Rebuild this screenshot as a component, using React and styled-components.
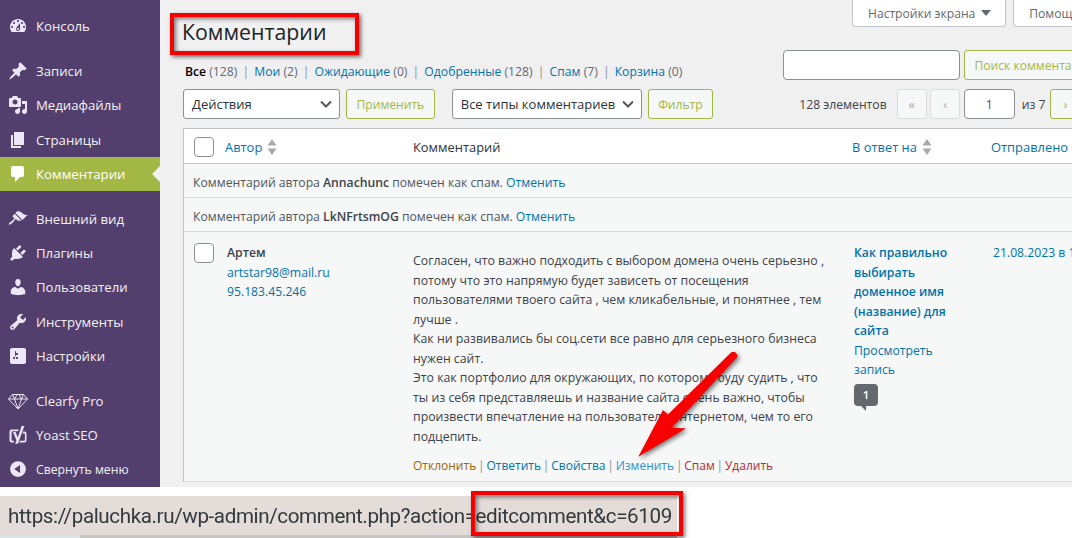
import React from "react";
import styled, { createGlobalStyle } from "styled-components";

const GlobalStyle = createGlobalStyle`
  html, body { margin: 0; padding: 0; background: #fff; }
  body { font-family: "Open Sans", "Noto Sans", sans-serif; font-size: 13px; color: #3c434a; }
  * { box-sizing: border-box; }
`;

const Page = styled.div`
  position: relative;
  width: 1072px;
  height: 538px;
  overflow: hidden;
  display: flex;
  flex-direction: column;
  background: #fff;
`;
const Workspace = styled.div`
  display: flex;
  height: 487px;
  flex: none;
  background: #f0f0f1;
`;
const Sidebar = styled.nav`
  width: 160px;
  flex: none;
  background: #523f6d;
  padding-top: 9px;
`;
const MenuItem = styled.div`
  position: relative;
  height: 34.3px;
  display: flex;
  align-items: center;
  gap: 8px;
  padding-left: 8px;
  font-size: ${(p) => (p.$small ? "12.2px" : "13.2px")};
  color: ${(p) => (p.$active ? "#fff" : "#f3f1f1")};
  background: ${(p) => (p.$active ? "#a3b745" : "transparent")};
  ${(p) =>
    p.$active &&
    `&::after {
      content: "";
      position: absolute;
      right: 0;
      top: 50%;
      margin-top: -8px;
      border: 8px solid transparent;
      border-right-color: #f0f0f1;
      border-left-width: 0;
    }`}
`;
const MenuGap = styled.div`
  height: 10.6px;
`;
const MenuIcon = styled.svg`
  width: 20px;
  height: 20px;
  flex: none;
  fill: ${(p) => (p.$active ? "#fff" : "#ece6f6")};
`;

const Main = styled.main`
  flex: 1;
  min-width: 0;
  overflow: hidden;
`;
const Content = styled.div`
  width: 940px;
  padding-left: 23px;
`;
const HeadRow = styled.div`
  display: flex;
  justify-content: space-between;
  height: 50px;
`;
const Title = styled.h1`
  margin: 0 0 0 -1px;
  padding-top: 16px;
  font-size: 21.3px;
  font-weight: 400;
  line-height: 32px;
  color: #1d2327;
`;
const ScreenTabs = styled.div`
  display: flex;
  gap: 7px;
  width: 248px;
`;
const ScreenTab = styled.div`
  height: 27px;
  padding: 0 14px 0 15px;
  display: flex;
  align-items: center;
  gap: 6px;
  flex: none;
  background: #fff;
  border: 1px solid #c3c4c7;
  border-top: none;
  border-radius: 0 0 4px 4px;
  font-size: 12.1px;
  color: #646970;
`;
const Caret = styled.span`
  width: 0;
  height: 0;
  border: 5px solid transparent;
  border-top: 6px solid #646970;
  border-bottom: none;
`;
const SearchRow = styled.div`
  display: flex;
  justify-content: space-between;
  align-items: flex-start;
  height: 39px;
`;
const ViewList = styled.ul`
  list-style: none;
  display: flex;
  margin: 13px 0 0 2px;
  padding: 0;
  font-size: 12.2px;
  line-height: 18px;
  color: #646970;
`;
const ViewItem = styled.li`
  white-space: pre;
  &:not(:last-child)::after {
    content: "|";
    margin: 0 5.1px;
    color: #8c8f94;
  }
`;
const ViewLink = styled.span`
  color: ${(p) => (p.$current ? "#000" : "#0073aa")};
  font-weight: ${(p) => (p.$current ? 600 : 400)};
`;
const SearchBox = styled.div`
  display: flex;
  gap: 4px;
  width: 317px;
  flex: none;
`;
const SearchInput = styled.div`
  width: 177px;
  height: 30px;
  flex: none;
  background: #fff;
  border: 1px solid #8c8f94;
  border-radius: 4px;
`;
const GreenButton = styled.div`
  height: 30px;
  padding: 0 9.5px;
  display: flex;
  align-items: center;
  justify-content: center;
  flex: none;
  background: #f6f7f7;
  border: 1px solid #a3b745;
  border-radius: 3px;
  color: #a3b745;
  font-size: 12.1px;
  white-space: nowrap;
`;
const Toolbar = styled.div`
  display: flex;
  align-items: center;
  height: 30px;
  margin-bottom: 9px;
`;
const Select = styled.div`
  width: ${(p) => p.$w}px;
  height: 30px;
  flex: none;
  margin-left: ${(p) => p.$ml || 0}px;
  margin-right: 6px;
  padding: 0 8px;
  display: flex;
  align-items: center;
  justify-content: space-between;
  background: #fff;
  border: 1px solid #8c8f94;
  border-radius: 3px;
  color: #2c3338;
  font-size: 13px;
  white-space: nowrap;
`;
const Chevron = styled.svg`
  width: 12px;
  height: 8px;
  flex: none;
  margin-right: -1px;
  fill: none;
  stroke: #50575e;
  stroke-width: 2;
`;
const Pager = styled.div`
  display: flex;
  align-items: center;
  margin-left: 86px;
  font-size: 12.2px;
  color: #3c434a;
`;
const PagerCount = styled.span`
  margin-right: 10px;
`;
const PagerButton = styled.div`
  width: 30px;
  height: 30px;
  margin-right: 3.5px;
  flex: none;
  display: flex;
  align-items: center;
  justify-content: center;
  background: #f6f7f7;
  border: 1px solid ${(p) => (p.$live ? "#a3b745" : "#dcdcde")};
  border-radius: 3px;
  color: ${(p) => (p.$live ? "#a3b745" : "#a7aaad")};
  font-size: 13px;
`;
const PagerInput = styled.div`
  width: 51px;
  height: 30px;
  flex: none;
  display: flex;
  align-items: center;
  justify-content: center;
  background: #fff;
  border: 1px solid #8c8f94;
  border-radius: 4px;
  color: #523f6d;
`;
const PagerTotal = styled.span`
  margin: 0 5px 0 7px;
`;

const Table = styled.div`
  width: 1000px;
  background: #fff;
  border: 1px solid #c3c4c7;
  border-bottom: none;
`;
const GridRow = styled.div`
  display: grid;
  grid-template-columns: 41px 188px 439px 139px 1fr;
`;
const HeadCells = styled(GridRow)`
  height: 35px;
  padding-top: 2px;
  align-items: center;
  background: #fff;
  border-bottom: 1px solid #c3c4c7;
  font-size: 12.9px;
`;
const Check = styled.span`
  display: block;
  width: 20px;
  height: 20px;
  margin: ${(p) => p.$m || "-1px 0 0 10px"};
  background: #fff;
  border: 1px solid #8c8f94;
  border-radius: 4px;
`;
const SortHead = styled.div`
  display: flex;
  align-items: center;
  gap: 5px;
  color: ${(p) => (p.$plain ? "#2c3338" : "#0073aa")};
`;
const SortIcon = styled.svg`
  width: 10px;
  height: 16px;
  margin-top: -1px;
  fill: #a7aaad;
`;
const UndoRow = styled.div`
  height: 34px;
  padding: 4px 0 0 9px;
  display: flex;
  align-items: center;
  white-space: pre;
  background: #f6f7f7;
  border-bottom: 1px solid #dcdcde;
  font-size: 12.2px;
  color: #50575e;
`;
const UndoName = styled.strong`
  font-weight: 600;
  color: #3c434a;
`;
const Link = styled.span`
  color: ${(p) => p.$c || "#0073aa"};
  font-weight: ${(p) => (p.$bold ? 600 : 400)};
`;
const CommentRow = styled(GridRow)`
  height: 250px;
  background: #f6f7f7;
  border-bottom: 1px solid #dcdcde;
  font-size: 12.2px;
  line-height: 19.5px;
`;
const AuthorCell = styled.div`
  padding: 11px 0 0 2px;
  display: flex;
  flex-direction: column;
`;
const AuthorName = styled.strong`
  font-weight: 600;
  color: #3c434a;
`;
const CommentCell = styled.div`
  padding-top: 19px;
  color: #3c434a;
  white-space: nowrap;
`;
const CommentLine = styled.div`
  font-size: 12.3px;
`;
const Actions = styled.div`
  display: flex;
  margin-top: 10px;
  font-size: 12px;
`;
const ActionSep = styled.span`
  margin: 0 1.8px;
  color: #8c8f94;
`;
const ReplyCell = styled.div`
  padding: 11px 0 0 2px;
  width: 110px;
`;
const Bubble = styled.div`
  position: relative;
  width: 24px;
  height: 22px;
  margin-top: 4px;
  background: #646970;
  border-radius: 4px;
  display: flex;
  align-items: center;
  justify-content: center;
  color: #fff;
  font-weight: 600;
  font-size: 11.5px;
  &::after {
    content: "";
    position: absolute;
    left: 7px;
    bottom: -5px;
    border-top: 5px solid #646970;
    border-left: 5px solid transparent;
  }
`;
const DateCell = styled.div`
  padding: 11px 0 0 2px;
  color: #0073aa;
  white-space: nowrap;
`;

const StatusStrip = styled.div`
  flex: 1;
  padding-top: 9px;
`;
const StatusBar = styled.div`
  width: 677px;
  height: 39px;
  padding-left: 8px;
  display: flex;
  align-items: center;
  background: #e3dcd9;
  color: #33383d;
  font-family: Roboto, "Open Sans", sans-serif;
  font-size: 20.6px;
  letter-spacing: -0.38px;
  white-space: nowrap;
`;
const StatusText = styled.span`
  filter: blur(0.5px);
`;
const StatusEdge = styled.div`
  display: flex;
  width: 677px;
  height: 3px;
`;
const StatusEdgePart = styled.div`
  width: ${(p) => p.$w}px;
  flex: ${(p) => (p.$w ? "none" : 1)};
  background: ${(p) => p.$c};
`;

const RedFrame = styled.div`
  position: absolute;
  left: ${(p) => p.$x}px;
  top: ${(p) => p.$y}px;
  width: ${(p) => p.$w}px;
  height: ${(p) => p.$h}px;
  border: 4.5px solid #f50000;
  box-shadow: 2px 2px 4px rgba(0, 0, 0, 0.55), inset 2px 2px 4px rgba(0, 0, 0, 0.5);
  pointer-events: none;
`;
const ArrowLayer = styled.svg`
  position: absolute;
  left: 630px;
  top: 350px;
  width: 115px;
  height: 115px;
  overflow: visible;
  filter: drop-shadow(2px 2px 2px rgba(0, 0, 0, 0.5));
`;

const ICONS = {
  dashboard:
    "M3.76 16h12.48c1.1-1.37 1.76-3.11 1.76-5 0-4.42-3.58-8-8-8s-8 3.58-8 8c0 1.89.66 3.63 1.76 5zM10 4c.55 0 1 .45 1 1s-.45 1-1 1-1-.45-1-1 .45-1 1-1zM6 6c.55 0 1 .45 1 1s-.45 1-1 1-1-.45-1-1 .45-1 1-1zm8 0c.55 0 1 .45 1 1s-.45 1-1 1-1-.45-1-1 .45-1 1-1zm-5.37 5.55L12 7v6c0 1.1-.9 2-2 2s-2-.9-2-2c0-.57.24-1.08.63-1.45zM4 10c.55 0 1 .45 1 1s-.45 1-1 1-1-.45-1-1 .45-1 1-1zm12 0c.55 0 1 .45 1 1s-.45 1-1 1-1-.45-1-1 .45-1 1-1zm-5 3c0-.55-.45-1-1-1s-1 .45-1 1 .45 1 1 1 1-.45 1-1z",
  pin: "M10.44 3.02l1.82-1.82 6.36 6.35-1.83 1.82c-1.05-.68-2.48-.57-3.41.36l-.75.75c-.92.93-1.04 2.35-.35 3.41l-1.83 1.82-2.41-2.41-2.8 2.79c-.42.42-3.38 2.71-3.8 2.29s1.86-3.39 2.28-3.81l2.79-2.79L4.1 9.36l1.83-1.82c1.05.69 2.48.57 3.4-.36l.75-.75c.93-.92 1.05-2.35.36-3.41z",
  media:
    "M13 11V4c0-.55-.45-1-1-1h-1.67L9 1H5L3.67 3H2c-.55 0-1 .45-1 1v7c0 .55.45 1 1 1h10c.55 0 1-.45 1-1zM7 4.5c1.38 0 2.5 1.12 2.5 2.5S8.38 9.5 7 9.5 4.5 8.38 4.5 7 5.62 4.5 7 4.5zM14 6h5v10.5c0 1.38-1.12 2.5-2.5 2.5S14 17.88 14 16.5s1.12-2.5 2.5-2.5c.17 0 .34.02.5.05V9h-3V6zm-4 8.05V13h2v3.5c0 1.38-1.12 2.5-2.5 2.5S7 17.88 7 16.5 8.12 14 9.5 14c.17 0 .34.02.5.05z",
  page: "M6 15V2h10v13H6zm-1 1h8v2H3V5h2v11z",
  comments:
    "M5 2h9c1.1 0 2 .9 2 2v7c0 1.1-.9 2-2 2h-2l-5 5v-5H5c-1.1 0-2-.9-2-2V4c0-1.1.9-2 2-2z",
  appearance:
    "M14.48 11.06L7.41 3.99l1.5-1.5c.5-.56 2.3-.47 3.51.32 1.21.8 1.43 1.28 2.91 2.1 1.18.64 2.45 1.26 4.45.85zm-.71.71L6.7 4.7 4.93 6.47c-.39.39-.39 1.02 0 1.41l1.06 1.06c.39.39.39 1.03 0 1.42-.6.6-1.43 1.11-2.21 1.69-.35.26-.7.53-1.01.84C1.43 13.23.4 14.85 1 15.47c.62.6 2.24-.43 3.58-1.77.31-.31.58-.66.84-1.01.58-.78 1.09-1.61 1.69-2.21.39-.39 1.03-.39 1.42 0l1.06 1.06c.39.39 1.02.39 1.41 0z",
  plugins:
    "M13.11 4.36L9.87 7.6 8 5.73l3.24-3.24c.35-.34 1.05-.2 1.56.32.52.51.66 1.21.31 1.55zm-8 1.77l.91-1.12 9.01 9.01-1.19.84c-.71.71-2.63 1.16-3.82 1.16H6.14L4.9 17.26c-.59.59-1.54.59-2.12 0-.59-.58-.59-1.53 0-2.12l1.24-1.24v-3.88c0-1.13.4-3.19 1.09-3.89zm7.26 3.97l3.24-3.24c.34-.35 1.04-.21 1.55.31.52.51.66 1.21.31 1.55l-3.24 3.25z",
  users:
    "M10 9.25c-2.27 0-2.73-3.44-2.73-3.44C7 4.02 7.82 2 9.97 2c2.16 0 2.98 2.02 2.71 3.81 0 0-.41 3.44-2.68 3.44zm0 2.57L12.72 10c2.39 0 4.52 2.33 4.52 4.53v2.49s-3.65 1.13-7.24 1.13c-3.65 0-7.24-1.13-7.24-1.13v-2.49c0-2.25 1.94-4.48 4.47-4.48z",
  tools:
    "M16.68 9.77c-1.34 1.34-3.3 1.67-4.95.99l-5.41 6.52c-.99.99-2.59.99-3.58 0s-.99-2.59 0-3.57l6.52-5.42c-.68-1.65-.35-3.61.99-4.95 1.28-1.28 3.12-1.62 4.72-1.06l-2.89 2.89 2.82 2.82 2.86-2.87c.53 1.58.18 3.39-1.08 4.65zM3.81 16.21c.4.39 1.04.39 1.43 0 .4-.4.4-1.04 0-1.43-.39-.4-1.03-.4-1.43 0-.39.39-.39 1.03 0 1.43z",
  settings:
    "M18 16V4c0-1.1-.9-2-2-2H4c-1.1 0-2 .9-2 2v12c0 1.1.9 2 2 2h12c1.1 0 2-.9 2-2zM8 11h1c.55 0 1 .45 1 1s-.45 1-1 1H8v1.5c0 .28-.22.5-.5.5s-.5-.22-.5-.5V13H6c-.55 0-1-.45-1-1s.45-1 1-1h1V5.5c0-.28.22-.5.5-.5s.5.22.5.5V7h1c.55 0 1 .45 1 1s-.45 1-1 1h-1v5.5c0 .28-.22.5-.5.5s-.5-.22-.5-.5V9z",
  yoast:
    "M3.5 4.5h7.2L10 6.3H4.6c-.6 0-1 .4-1 1v7.4c0 .6.4 1 1 1h1.7l-.6 1.8H3.5A2 2 0 0 1 1.5 15.5V6.5a2 2 0 0 1 2-2zM13.6 1h2.8L9.9 18.8H7.2l1.3-3.4L5 7h2.6l2.2 5.4zM15.2 6.6h1.3a2 2 0 0 1 2 2v7a2 2 0 0 1-2 2h-5.3l.7-1.8h4c.6 0 1-.4 1-1V8.4h-2.3z",
  collapse:
    "M10 2.16c4.33 0 7.84 3.51 7.84 7.84s-3.51 7.84-7.84 7.84S2.16 14.33 2.16 10 5.71 2.16 10 2.16zm2 11.72V6.12L6.18 9.97z",
};

function Icon({ name, active }) {
  return (
    <MenuIcon viewBox="0 0 20 20" $active={active}>
      <path d={ICONS[name]} />
    </MenuIcon>
  );
}

function DiamondIcon() {
  return (
    <MenuIcon viewBox="0 0 20 20" fill="none">
      <g stroke="#ece6f6" strokeWidth="1" strokeLinejoin="round" fill="none">
        <path d="M4.5 3.5h11L19.5 8 10 18 .5 8z" />
        <path d="M.5 8h19M4.5 3.5 6.5 8 10 18l3.5-10 2-4.5M6.5 8 9 3.5h2L13.5 8" />
      </g>
    </MenuIcon>
  );
}

function SortArrows() {
  return (
    <SortIcon viewBox="0 0 10 16">
      <path d="M5 0l4.5 6.5h-9zM5 16L.5 9.5h9z" />
    </SortIcon>
  );
}

const MENU = [
  [["dashboard", "Консоль"]],
  [
    ["pin", "Записи"],
    ["media", "Медиафайлы"],
    ["page", "Страницы"],
    ["comments", "Комментарии", true],
  ],
  [
    ["appearance", "Внешний вид"],
    ["plugins", "Плагины"],
    ["users", "Пользователи"],
    ["tools", "Инструменты"],
    ["settings", "Настройки"],
  ],
];

const COMMENT_LINES = [
  "Согласен, что важно подходить с выбором домена очень серьезно ,",
  "потому что это напрямую будет зависеть от посещения",
  "пользователями твоего сайта , чем кликабельные, и понятнее , тем",
  "лучше .",
  "Как ни развивались бы соц.сети все равно для серьезного бизнеса",
  "нужен сайт.",
  "Это как портфолио для окружающих, по которому буду судить , что",
  "ты из себя представляешь и название сайта очень важно, чтобы",
  "произвести впечатление на пользователя интернетом, чем то его",
  "подцепить.",
];

const ACTIONS = [
  ["Отклонить", "#996800"],
  ["Ответить"],
  ["Свойства"],
  ["Изменить", "#2f8fd0"],
  ["Спам", "#b32d2e"],
  ["Удалить", "#b32d2e"],
];

export default function App() {
  return (
    <>
      <GlobalStyle />
      <Page>
        <Workspace>
          <Sidebar>
            {MENU.map((group, i) => (
              <React.Fragment key={i}>
                {group.map(([icon, label, active]) => (
                  <MenuItem key={label} $active={active}>
                    <Icon name={icon} active={active} />
                    {label}
                  </MenuItem>
                ))}
                <MenuGap />
              </React.Fragment>
            ))}
            <MenuItem>
              <DiamondIcon />
              Clearfy Pro
            </MenuItem>
            <MenuItem>
              <Icon name="yoast" />
              Yoast SEO
            </MenuItem>
            <MenuItem $small>
              <Icon name="collapse" />
              Свернуть меню
            </MenuItem>
          </Sidebar>
          <Main>
            <Content>
              <HeadRow>
                <Title>Комментарии</Title>
                <ScreenTabs>
                  <ScreenTab>
                    Настройки экрана
                    <Caret />
                  </ScreenTab>
                  <ScreenTab>Помощь</ScreenTab>
                </ScreenTabs>
              </HeadRow>
              <SearchRow>
                <ViewList>
                  <ViewItem><ViewLink $current>Все</ViewLink> (128)</ViewItem>
                  <ViewItem><ViewLink>Мои</ViewLink> (2)</ViewItem>
                  <ViewItem><ViewLink>Ожидающие</ViewLink> (0)</ViewItem>
                  <ViewItem><ViewLink>Одобренные</ViewLink> (128)</ViewItem>
                  <ViewItem><ViewLink>Спам</ViewLink> (7)</ViewItem>
                  <ViewItem><ViewLink>Корзина</ViewLink> (0)</ViewItem>
                </ViewList>
                <SearchBox>
                  <SearchInput />
                  <GreenButton>Поиск комментариев</GreenButton>
                </SearchBox>
              </SearchRow>
              <Toolbar>
                <Select $w={157}>
                  Действия
                  <Chevron viewBox="0 0 12 8"><path d="M1 1.5l5 5 5-5" /></Chevron>
                </Select>
                <GreenButton>Применить</GreenButton>
                <Select $w={190} $ml={17}>
                  Все типы комментариев
                  <Chevron viewBox="0 0 12 8"><path d="M1 1.5l5 5 5-5" /></Chevron>
                </Select>
                <GreenButton>Фильтр</GreenButton>
                <Pager>
                  <PagerCount>128 элементов</PagerCount>
                  <PagerButton>«</PagerButton>
                  <PagerButton>‹</PagerButton>
                  <PagerInput>1</PagerInput>
                  <PagerTotal>из 7</PagerTotal>
                  <PagerButton $live>›</PagerButton>
                </Pager>
              </Toolbar>
              <Table>
                <HeadCells>
                  <Check />
                  <SortHead>Автор <SortArrows /></SortHead>
                  <SortHead $plain>Комментарий</SortHead>
                  <SortHead>В ответ на <SortArrows /></SortHead>
                  <SortHead>Отправлено</SortHead>
                </HeadCells>
                <UndoRow>
                  Комментарий автора <UndoName>Annachunc</UndoName> помечен как спам. <Link>Отменить</Link>
                </UndoRow>
                <UndoRow>
                  Комментарий автора <UndoName>LkNFrtsmOG</UndoName> помечен как спам. <Link>Отменить</Link>
                </UndoRow>
                <CommentRow>
                  <Check $m="11px 0 0 10px" />
                  <AuthorCell>
                    <AuthorName>Артем</AuthorName>
                    <Link>artstar98@mail.ru</Link>
                    <Link>95.183.45.246</Link>
                  </AuthorCell>
                  <CommentCell>
                    {COMMENT_LINES.map((line) => (
                      <CommentLine key={line}>{line}</CommentLine>
                    ))}
                    <Actions>
                      {ACTIONS.map(([label, color], i) => (
                        <React.Fragment key={label}>
                          {i > 0 && <ActionSep>|</ActionSep>}
                          <Link $c={color}>{label}</Link>
                        </React.Fragment>
                      ))}
                    </Actions>
                  </CommentCell>
                  <ReplyCell>
                    <Link $bold>Как правильно выбирать доменное имя (название) для сайта</Link>
                    <div><Link>Просмотреть запись</Link></div>
                    <Bubble>1</Bubble>
                  </ReplyCell>
                  <DateCell>21.08.2023 в 16:25</DateCell>
                </CommentRow>
              </Table>
            </Content>
          </Main>
        </Workspace>
        <StatusStrip>
          <StatusBar>
            <StatusText>https://paluchka.ru/wp-admin/comment.php?action=editcomment&amp;c=6109</StatusText>
          </StatusBar>
          <StatusEdge>
            <StatusEdgePart $w={80} $c="#d8e4e6" />
            <StatusEdgePart $c="#c6c6c4" />
          </StatusEdge>
        </StatusStrip>
        <RedFrame $x={170} $y={13} $w={189} $h={42} />
        <RedFrame $x={471} $y={491} $w={212} $h={45} />
        <ArrowLayer viewBox="0 0 115 115">
          <path
            d="M100.5 3L38 64.5l-5-4.5L8.3 106.7 56 78.5 42 77.5l64-69a3.5 3.5 0 0 0-5.5-5.5z"
            fill="#f70000"
          />
        </ArrowLayer>
      </Page>
    </>
  );
}
